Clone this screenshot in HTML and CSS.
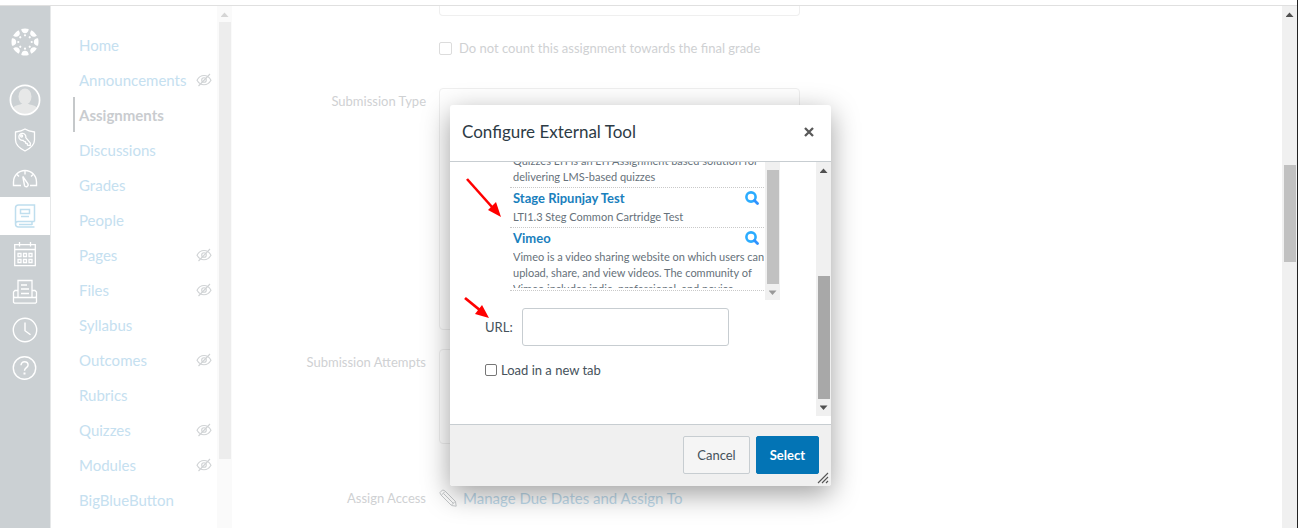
FILE: index.html
```html
<!DOCTYPE html>
<html lang="en">
<head>
<meta charset="utf-8">
<title>Configure External Tool</title>
<link rel="stylesheet" href="styles.css">
</head>
<body>
<svg class="defs" aria-hidden="true">
  <symbol id="eye-off" viewBox="0 0 16 14"><g fill="none" stroke="currentColor" stroke-width="1.100"><path d="M1 7.200C3 3.600 5.500 2.500 8 2.500s5 1.100 7 4.700c-2 3.500-4.500 4.500-7 4.500s-5-1-7-4.500z"/><circle cx="8" cy="7" r="2.300"/><path d="M2.500 13 14 1"/></g></symbol>
  <symbol id="magnify" viewBox="0 0 14 14"><circle cx="6" cy="6" r="4.600" fill="none" stroke="#2bacff" stroke-width="2.600"/><path d="m9.500 9.500 3 3" stroke="#2f93ff" stroke-width="2.800" stroke-linecap="round"/></symbol>
</svg>
<div class="page">
  <div class="app">
    <nav class="rail" aria-label="Global">
      <a href="#" class="rail-logo" aria-label="Dashboard"><svg width="28" height="28" viewBox="0 0 28 28" fill="#fff"><g id="seg"><path d="M10.300 1a13.500 13.500 0 0 1 7.400 0c0 2.700-1.700 4.200-3.700 4.200S10.300 3.700 10.300 1z"/><circle cx="14" cy="7.300" r="1.100"/></g><use href="#seg" transform="rotate(45 14 14)"/><use href="#seg" transform="rotate(90 14 14)"/><use href="#seg" transform="rotate(135 14 14)"/><use href="#seg" transform="rotate(180 14 14)"/><use href="#seg" transform="rotate(225 14 14)"/><use href="#seg" transform="rotate(270 14 14)"/><use href="#seg" transform="rotate(315 14 14)"/></svg></a>
      <a href="#" class="rail-avatar" aria-label="Account"><svg width="32" height="32" viewBox="0 0 32 32"><clipPath id="round"><circle cx="16" cy="16" r="14.500"/></clipPath><g clip-path="url(#round)" fill="#e7e8e8"><ellipse cx="16" cy="12.500" rx="6.500" ry="8"/><path d="M2 30c0-6 3-8 8-9.200 2-.5 3-1 3.500-1.300h5c.5.300 1.500.800 3.500 1.300 5 1.200 8 3.200 8 9.200z"/></g><circle cx="16" cy="16" r="14.600" fill="none" stroke="#fff" stroke-width="1.700"/></svg></a>
      <a href="#" class="rail-item" aria-label="Admin"><svg width="26" height="26" viewBox="0 0 26 26" fill="none" stroke="#fff" stroke-width="1.300"><path d="M13 2c3 2 6 2.600 9.500 3v8c0 5-4.500 8.500-9.500 11-5-2.500-9.500-6-9.500-11V5C7 4.600 10 4 13 2z"/><path d="M13.800 10.600a3.500 3.500 0 1 0-2.900 2.700l1.300 1.200 1.200.3.300 1.400 1.500.4.300 1.600 2.700.4.200-2.400z"/><circle cx="9.600" cy="9" r="1"/></svg></a>
      <a href="#" class="rail-item" aria-label="Dashboard"><svg width="26" height="26" viewBox="0 0 26 26" fill="none" stroke="#fff" stroke-width="1.400"><path d="M9 20.500H1.500V17a11.500 11.500 0 0 1 23 0v3.500H18"/><path d="M13 5.500v4M5 9.500l2 2M21 9.500l-2 2M10.800 11.500l5 7.200c.7 1.300.3 2.300-.6 2.800-1 .500-2.200.1-2.700-1z"/></svg></a>
      <a href="#" class="rail-item active" aria-label="Courses"><svg width="26" height="26" viewBox="0 0 26 26" fill="none" stroke="#bfdeee" stroke-width="1.500"><path d="M22.500 18.500V2H6.500a3 3 0 0 0-3 3v16a3 3 0 0 0 3 3h16M3.500 21a2.500 2.500 0 0 1 2.500-2.500h16.500M20 18.500v3.500M7 21.500h13"/><path d="M8.500 6.500h9v4h-9zM9 13.500h8"/></svg></a>
      <a href="#" class="rail-item" aria-label="Calendar"><svg width="26" height="26" viewBox="0 0 26 26" fill="none" stroke="#fff" stroke-width="1.300"><path d="M2.700 3.700h20.600v21H2.700zM2.700 8.500h20.600M7.500 1v4.500M18.500 1v4.500"/><path d="M6 12.500h3v3H6zM11.500 12.500h3v3h-3zM17 12.500h3v3h-3zM6 18.500h3v3H6zM11.500 18.500h3v3h-3zM17 18.500h3v3h-3z"/></svg></a>
      <a href="#" class="rail-item" aria-label="Inbox"><svg width="26" height="26" viewBox="0 0 26 26" fill="none" stroke="#fff" stroke-width="1.300"><path d="M6 18.500v-17h14v17M6 11.500H3L1.500 13v10.200l1 1h21l1-1V13L23 11.500h-3M1.500 17.500l1 1h21l1-1M9 6h6M9 10h8M9 14.500h8"/></svg></a>
      <a href="#" class="rail-item" aria-label="History"><svg width="26" height="26" viewBox="0 0 26 26" fill="none" stroke="#fff" stroke-width="1.400"><circle cx="13" cy="13" r="11.700"/><path d="M13 5.500v8.200l5.500 4"/></svg></a>
      <a href="#" class="rail-item" aria-label="Help"><svg width="26" height="26" viewBox="0 0 26 26" fill="none" stroke="#fff" stroke-width="1.400"><circle cx="12.500" cy="13" r="11.200"/><path d="M9 10.300c0-2.300 1.500-3.600 3.500-3.600s3.600 1.300 3.600 3.200c0 2.800-3.600 2.700-3.600 5.900"/><path d="M12.500 17.500v2" stroke-width="2"/></svg></a>
    </nav>
    <div class="course-nav">
      <ul class="course-links">
        <li><a href="#">Home</a></li>
        <li><a href="#">Announcements</a><svg class="eye"><use href="#eye-off"/></svg></li>
        <li class="current"><a href="#">Assignments</a></li>
        <li><a href="#">Discussions</a></li>
        <li><a href="#">Grades</a></li>
        <li><a href="#">People</a></li>
        <li><a href="#">Pages</a><svg class="eye"><use href="#eye-off"/></svg></li>
        <li><a href="#">Files</a><svg class="eye"><use href="#eye-off"/></svg></li>
        <li><a href="#">Syllabus</a></li>
        <li><a href="#">Outcomes</a><svg class="eye"><use href="#eye-off"/></svg></li>
        <li><a href="#">Rubrics</a></li>
        <li><a href="#">Quizzes</a><svg class="eye"><use href="#eye-off"/></svg></li>
        <li><a href="#">Modules</a><svg class="eye"><use href="#eye-off"/></svg></li>
        <li><a href="#">BigBlueButton</a></li>
      </ul>
      <div class="bar bar-nav"><span class="up"></span><span class="thumb"></span></div>
    </div>
    <main class="form">
      <div class="box box-top"></div>
      <label class="check-row"><input type="checkbox" class="tick faint">Do not count this assignment towards the final grade</label>
      <span class="label">Submission Type</span>
      <div class="box box-type"></div>
      <span class="label">Submission Attempts</span>
      <div class="box box-attempts"></div>
      <span class="label label-access">Assign Access</span>
      <a href="#" class="manage"><svg width="18" height="18" viewBox="0 0 18 18" fill="none" stroke="#c6c9cb" stroke-width="1"><path d="M1 3.500 3.500 1l2 .5 11 11 .7 4.700-4.700-.7-11-11zM2.500 6 6 2.500M4.500 4.500l10 10M12.500 16l3.500-3.500"/></svg>Manage Due Dates and Assign To</a>
    </main>
    <div class="bar bar-page"><span class="up"></span><span class="thumb"></span></div>
  </div>
  <div class="overlay">
    <section class="modal" role="dialog" aria-labelledby="title">
      <header class="modal-head">
        <h2 id="title">Configure External Tool</h2>
        <button type="button" class="close" aria-label="Close"><svg width="10" height="10" viewBox="0 0 10 10"><path d="m1 1 8 8M9 1 1 9" stroke="#595959" stroke-width="2.300"/></svg></button>
      </header>
      <div class="modal-body">
        <div class="scroll">
          <div class="tools">
            <ul class="tool-list">
              <li><p>Quizzes LTI is an LTI Assignment based solution for<br>delivering LMS-based quizzes</p></li>
              <li><div class="tool-name"><a href="#">Stage Ripunjay Test</a><svg class="mag"><use href="#magnify"/></svg></div><p>LTI1.3 Steg Common Cartridge Test</p></li>
              <li><div class="tool-name"><a href="#">Vimeo</a><svg class="mag"><use href="#magnify"/></svg></div><p class="clipped">Vimeo is a video sharing website on which users can<br>upload, share, and view videos. The community of<br>Vimeo includes indie, professional, and novice</p></li>
            </ul>
            <div class="bar bar-tools"><span class="thumb"></span><span class="down"></span></div>
          </div>
          <div class="url-row"><label for="url">URL:</label><input type="text" id="url"></div>
          <label class="tab-row"><input type="checkbox" class="tick">Load in a new tab</label>
        </div>
        <div class="bar bar-body"><span class="up"></span><span class="thumb"></span><span class="down"></span></div>
      </div>
      <footer class="modal-foot">
        <button type="button" class="btn">Cancel</button>
        <button type="button" class="btn primary">Select</button>
      </footer>
      <svg class="grip" viewBox="0 0 12 12"><path d="M1 11 11 1M5 11l6-6M9 11l2-2" stroke="#555" stroke-width="1.100"/></svg>
      <svg class="arrow arrow-list" viewBox="0 0 36 42"><path d="m2 2 25 28" stroke="#f00" stroke-width="2.600"/><path d="m36 40-13-7 8-8z" fill="#f00"/></svg>
      <svg class="arrow arrow-url" viewBox="0 0 27 23"><path d="m2 2 16 13" stroke="#f00" stroke-width="2.800"/><path d="m26 22-14-4 7-9z" fill="#f00"/></svg>
    </section>
  </div>
</div>
</body>
</html>
```
FILE: styles.css
```css
* { box-sizing: border-box; }
body { margin: 0; font-family: Lato, "Liberation Sans", sans-serif; background: #fff; color: #2d3b45; }
a { text-decoration: none; }
ul { list-style: none; margin: 0; padding: 0; }
p, h2 { margin: 0; }
svg { display: block; flex: none; }
.defs { position: absolute; width: 0; height: 0; }
.page { position: relative; height: 100vh; padding-top: 5px; overflow: hidden; border-right: 1px solid #222; }
.app { display: flex; height: 100%; border-top: 1px solid #e0e0e0; }

.rail { width: 51px; flex: none; background: #cbd0d3; border-right: 1px solid #e6e8e9; }
.rail a { display: flex; align-items: center; justify-content: center; height: 38px; }
.rail .rail-logo { height: 72px; }
.rail .rail-avatar { height: 43px; }
.rail .active { background: #fff; }

.course-nav { display: flex; width: 181px; flex: none; }
.course-links { flex: 1; padding: 21px 5px 0 22px; overflow: hidden; }
.course-links li { display: flex; align-items: center; justify-content: space-between; height: 35px; padding-left: 4px; border-left: 2px solid transparent; }
.course-links a { color: #c5e0f0; font-size: 15px; }
.course-links .current { border-color: #c5c8ca; }
.course-links .current a { color: #c9cccf; font-weight: 700; }
.eye { width: 16px; height: 14px; color: #d0d3d5; }

.bar { display: flex; flex-direction: column; align-items: center; width: 15px; flex: none; background: #f0f0f0; }
.up, .down { height: 16px; width: 8px; flex: none; background: #505050; clip-path: polygon(50% 40%, 100% 68%, 0 68%); }
.down { clip-path: polygon(0 40%, 100% 40%, 50% 68%); }
.thumb { width: 12px; background: #c1c1c1; }
.bar-nav { background: #fafafa; }
.bar-nav .up { background: #d5d5d5; }
.bar-nav .thumb { height: 437px; background: #ededed; }
.bar-page .up { margin-bottom: 143px; }
.bar-page .thumb { height: 97px; }

.form { flex: 1; display: grid; grid-template-columns: 194px 361px; column-gap: 13px; align-content: start; color: #cfd1d3; font-size: 13px; }
.box { border: 1px solid #efefef; border-radius: 4px; }
.box-top { grid-column: 2; height: 10px; border-top: 0; border-radius: 0 0 4px 4px; }
.check-row { grid-column: 2; display: flex; align-items: center; gap: 7px; height: 20px; margin: 22px 0 30px; white-space: nowrap; }
.label { text-align: right; line-height: 20px; padding-top: 3px; }
.box-type { height: 242px; margin-bottom: 19px; }
.box-attempts { height: 95px; margin-bottom: 42px; }
.label-access { padding: 0; line-height: 24px; }
.manage { display: flex; align-items: center; gap: 6px; height: 24px; color: #bfdbec; font-size: 15px; white-space: nowrap; }
.tick { appearance: none; width: 12px; height: 12px; margin: 0; border: 1px solid #767676; border-radius: 2px; background: #fff; flex: none; }
.faint { width: 13px; height: 13px; border-color: #dcdcdc; }

.overlay { position: absolute; inset: 0 16px 0 0; display: flex; justify-content: center; align-items: flex-start; padding-top: 105px; }
.modal { position: relative; width: 381px; background: #fff; border-radius: 3px; box-shadow: 0 8px 28px rgba(0, 0, 0, .38); }
.modal-head { display: flex; align-items: center; justify-content: space-between; height: 57px; padding: 0 17px 3px 12px; border-bottom: 1px solid #c7cdd1; }
.modal-head h2 { font-size: 17px; font-weight: 400; }
.close { border: 0; background: none; padding: 0; }
.modal-body { display: flex; height: 262px; padding-bottom: 8px; }
.scroll { flex: 1; padding-left: 35px; color: #46525b; font-size: 13px; }
.tools { display: flex; height: 138px; padding-left: 25px; overflow: hidden; }
.tool-list { display: flex; flex-direction: column; justify-content: flex-end; width: 254px; padding-bottom: 9px; }
.tool-list li { flex: none; padding: 1px 0 2px 3px; border-bottom: 1px dotted #c9c9c9; }
.tool-name { display: flex; align-items: center; justify-content: space-between; height: 18px; margin-bottom: 2px; padding-right: 5px; font-size: 13px; font-weight: 700; }
.tool-name a { color: #1a80bd; }
.mag { width: 14px; height: 14px; }
.tool-list p { font-size: 11px; line-height: 16px; color: #66717a; white-space: nowrap; }
.tool-list .clipped { height: 39px; overflow: hidden; }
.bar-tools { margin-left: 1px; }
.bar-tools .thumb { height: 114px; margin-top: 8px; }
.bar-tools .down { background: #999; }
.url-row { display: flex; align-items: center; gap: 9px; margin-top: 8px; }
.url-row label { width: 28px; }
.url-row input { width: 207px; height: 38px; border: 1px solid #c7cdd1; border-radius: 3px; padding: 8px; font: inherit; }
.tab-row { display: flex; align-items: center; gap: 4px; height: 20px; margin-top: 14px; }
.bar-body .up { margin-bottom: 98px; }
.bar-body .thumb { height: 123px; background: #a8a8a8; }
.modal-foot { display: flex; justify-content: flex-end; gap: 6px; padding: 11px 12px 12px; background: #f0f0f0; border-top: 1px solid #c7cdd1; border-radius: 0 0 3px 3px; }
.btn { height: 38px; padding: 0 13px; border: 1px solid #c7cdd1; border-radius: 2px; background: #f5f5f5; color: #46525b; font: 13px Lato, sans-serif; }
.primary { border-color: #0374b5; background: #0374b5; color: #fff; font-weight: 700; }
.grip { position: absolute; right: 2px; bottom: 2px; width: 12px; height: 12px; }
.arrow { position: absolute; }
.arrow-list { left: 15px; top: 72px; width: 36px; height: 42px; }
.arrow-url { left: 13px; top: 191px; width: 27px; height: 23px; }
```
